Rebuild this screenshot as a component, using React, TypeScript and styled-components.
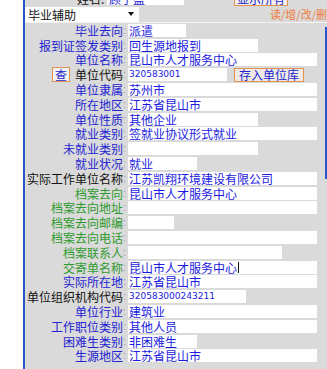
import React from 'react';
import styled, { createGlobalStyle } from 'styled-components';

const GlobalStyle = createGlobalStyle`
  html, body {
    margin: 0;
    padding: 0;
    background: #ffffff;
  }
  body {
    font-family: 'Noto Sans CJK SC', 'Noto Sans', sans-serif;
    font-size: 12px;
    overflow: hidden;
  }
`;

type Tone = 'blue' | 'green' | 'black';

interface Field {
  label: string;
  value: string;
  tone: Tone;
  width: number;
  code?: boolean;
  caret?: boolean;
  lookup?: boolean;
  save?: boolean;
}

const FULL = 189;

const fields: Field[] = [
  { label: '毕业去向', value: '派遣', tone: 'blue', width: 58 },
  { label: '报到证签发类别', value: '回生源地报到', tone: 'blue', width: 130 },
  { label: '单位名称', value: '昆山市人才服务中心', tone: 'blue', width: FULL },
  { label: '单位代码', value: '320583001', tone: 'black', width: 99, code: true, lookup: true, save: true },
  { label: '单位隶属', value: '苏州市', tone: 'blue', width: FULL },
  { label: '所在地区', value: '江苏省昆山市', tone: 'blue', width: FULL },
  { label: '单位性质', value: '其他企业', tone: 'blue', width: 130 },
  { label: '就业类别', value: '签就业协议形式就业', tone: 'blue', width: FULL },
  { label: '未就业类别', value: '', tone: 'blue', width: 130 },
  { label: '就业状况', value: '就业', tone: 'blue', width: 69 },
  { label: '实际工作单位名称', value: '江苏凯翔环境建设有限公司', tone: 'black', width: FULL },
  { label: '档案去向', value: '昆山市人才服务中心', tone: 'green', width: FULL },
  { label: '档案去向地址', value: '', tone: 'green', width: FULL },
  { label: '档案去向邮编', value: '', tone: 'green', width: 46 },
  { label: '档案去向电话', value: '', tone: 'green', width: FULL },
  { label: '档案联系人', value: '', tone: 'green', width: 154 },
  { label: '交寄单名称', value: '昆山市人才服务中心', tone: 'green', width: FULL, caret: true },
  { label: '实际所在地', value: '江苏省昆山市', tone: 'blue', width: FULL },
  { label: '单位组织机构代码', value: '320583000243211', tone: 'black', width: 118, code: true },
  { label: '单位行业', value: '建筑业', tone: 'blue', width: FULL },
  { label: '工作职位类别', value: '其他人员', tone: 'blue', width: FULL },
  { label: '困难生类别', value: '非困难生', tone: 'blue', width: 69 },
  { label: '生源地区', value: '江苏省昆山市', tone: 'blue', width: FULL },
];

const toneColor: Record<Tone, string> = {
  blue: '#2323d2',
  green: '#2f9a2f',
  black: '#111111',
};

const App = () => {
  return (
    <>
      <GlobalStyle />
      <Page>
        <Gutter />
        <EdgeLine />
        <Main>
          <Header>
            <NameRow>
              <NameLabel>姓名:</NameLabel>
              <NameBox>顾子盈</NameBox>
              <TopButton>显示所有</TopButton>
            </NameRow>
            <SelectRow>
              <SelectBox>
                <span>毕业辅助</span>
                <Arrow />
              </SelectBox>
              <Actions>读/增/改/删</Actions>
            </SelectRow>
          </Header>
          <Body>
            <Form>
              {fields.map(field => (
                <Row key={field.label}>
                  <LabelCell>
                    {field.lookup && <LookupButton>查</LookupButton>}
                    <Label $tone={field.tone}>{field.label}</Label>
                  </LabelCell>
                  <Colon>:</Colon>
                  <ValueBox $width={field.width} $code={field.code}>
                    {field.value}
                    {field.caret && <Caret />}
                  </ValueBox>
                  {field.save && <SaveButton>存入单位库</SaveButton>}
                </Row>
              ))}
            </Form>
            <RightStrip>
              <StripBar />
            </RightStrip>
          </Body>
        </Main>
      </Page>
    </>
  );
};

export default App;

const Page = styled.div`
  display: flex;
  width: 327px;
  height: 369px;
  overflow: hidden;
`;

const Gutter = styled.div`
  width: 23px;
  flex-shrink: 0;
  background: #ffffff;
`;

const EdgeLine = styled.div`
  width: 2px;
  flex-shrink: 0;
  background: #2a56c8;
`;

const Main = styled.div`
  flex: 1;
  min-width: 0;
  background: #dadada;
  overflow: hidden;
`;

const Header = styled.div`
  border-bottom: 1px solid #f2f2f2;
`;

const NameRow = styled.div`
  display: flex;
  align-items: center;
  height: 15px;
  margin-top: -9px;
  padding-left: 52px;
`;

const NameLabel = styled.span`
  color: #111111;
  line-height: 13px;
  width: 30px;
`;

const NameBox = styled.div`
  width: 75px;
  height: 13px;
  line-height: 13px;
  background: #ffffff;
  color: #2323d2;
  padding-left: 2px;
`;

const TopButton = styled.div`
  margin-left: 50px;
  width: 52px;
  height: 13px;
  line-height: 13px;
  border: 1px solid #e49250;
  background: #f3f0ee;
  color: #2323d2;
  text-align: center;
`;

const SelectRow = styled.div`
  display: flex;
  align-items: center;
  height: 16px;
`;

const SelectBox = styled.div`
  display: flex;
  align-items: center;
  justify-content: space-between;
  width: 122px;
  height: 15px;
  padding: 0 3px 0 3px;
  box-sizing: border-box;
  background: #ffffff;
  color: #111111;
  line-height: 15px;
`;

const Arrow = styled.span`
  width: 0;
  height: 0;
  margin-right: 2px;
  border-left: 3px solid transparent;
  border-right: 3px solid transparent;
  border-top: 4px solid #111111;
`;

const Actions = styled.div`
  margin-left: 131px;
  white-space: nowrap;
  font-size: 11px;
  line-height: 13px;
  color: #f07a38;
`;

const Body = styled.div`
  display: flex;
`;

const Form = styled.div`
  display: flex;
  flex-direction: column;
  width: 293px;
  flex-shrink: 0;
`;

const Row = styled.div`
  display: flex;
  align-items: center;
  height: 14.8px;
`;

const LabelCell = styled.div`
  display: flex;
  align-items: center;
  justify-content: flex-end;
  gap: 5px;
  width: 98px;
  flex-shrink: 0;
`;

const Label = styled.span<{ $tone: Tone }>`
  color: ${props => toneColor[props.$tone]};
  line-height: 13px;
  white-space: nowrap;
`;

const Colon = styled.span`
  width: 5px;
  flex-shrink: 0;
  color: #9a9ab8;
  font-family: 'Liberation Sans', sans-serif;
  font-size: 11px;
  line-height: 13px;
`;

const ValueBox = styled.div<{ $width: number; $code?: boolean }>`
  display: flex;
  align-items: center;
  width: ${props => props.$width}px;
  height: 13px;
  flex-shrink: 0;
  background: #ffffff;
  color: #1a1ae0;
  padding-left: 1px;
  box-sizing: border-box;
  white-space: nowrap;
  overflow: hidden;
  line-height: 13px;
  font-family: ${props =>
    props.$code ? "'DejaVu Sans', sans-serif" : "'Noto Sans CJK SC', sans-serif"};
  font-size: ${props => (props.$code ? '9px' : '12px')};
`;

const Caret = styled.span`
  width: 1px;
  height: 11px;
  margin-left: 1px;
  background: #111111;
`;

const LookupButton = styled.div`
  width: 16px;
  height: 13px;
  line-height: 13px;
  border: 1px solid #e49250;
  background: #f2f2f2;
  color: #2323d2;
  text-align: center;
`;

const SaveButton = styled.div`
  margin-left: 7px;
  height: 12px;
  padding: 0 4px;
  line-height: 12px;
  border: 1px solid #e49250;
  background: #eeeae6;
  color: #2323d2;
  white-space: nowrap;
`;

const RightStrip = styled.div`
  flex: 1;
  display: flex;
  justify-content: flex-end;
`;

const StripBar = styled.div`
  width: 2px;
  height: 152px;
  margin-top: 4px;
  background: #2a56c8;
`;
